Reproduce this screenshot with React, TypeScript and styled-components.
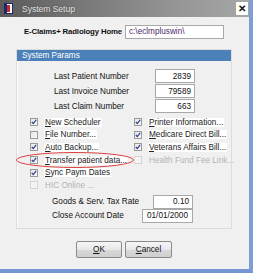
import React from "react";
import styled, { createGlobalStyle } from "styled-components";

const Global = createGlobalStyle`
  html, body { margin: 0; padding: 0; background: #f0f0f0; }
  body { font-family: "Liberation Sans", Arial, sans-serif; font-size: 8.2px; color: #111; }
`;

const Window = styled.div`
  position: relative;
  width: 253px;
  height: 273px;
  box-sizing: border-box;
  display: flex;
  flex-direction: column;
  background: #f0f0f0;
  border-right: 4px solid #7e9ed6;
  border-bottom: 4px solid #7596d2;
  overflow: hidden;
`;

const TitleBar = styled.div`
  height: 17px;
  flex: none;
  display: flex;
  align-items: center;
  padding-left: 4px;
  gap: 9px;
  background: linear-gradient(to right, #5a5a5a 0%, #767676 30%, #959595 70%, #a6a6a6 100%);
`;

const TitleText = styled.span`
  color: #e4e4e4;
  font-size: 8.5px;
  text-shadow: 0 0 2px #444;
  flex: 1;
`;

const CloseBtn = styled.div`
  width: 12px;
  height: 13px;
  margin-right: 1px;
  background: #fff;
  display: flex;
  align-items: center;
  justify-content: center;
  font-weight: bold;
  font-size: 10px;
`;

const Body = styled.div`
  flex: 1;
  display: flex;
  flex-direction: column;
  padding: 7px 17px 0 16px;
`;

const HomeRow = styled.div`
  display: flex;
  align-items: center;
  padding-left: 8px;
  gap: 7px;
  height: 15px;
  white-space: nowrap;
`;

const BoldLabel = styled.span`
  font-weight: bold;
  font-size: 7.8px;
  letter-spacing: -0.15px;
  width: 94px;
`;

const Field = styled.div<{ $w: number; $align?: string }>`
  width: ${(p) => p.$w}px;
  height: 14px;
  box-sizing: border-box;
  background: #fff;
  border: 1px solid #a8a8a8;
  display: flex;
  align-items: center;
  justify-content: ${(p) => (p.$align === "left" ? "flex-start" : p.$align === "center" ? "center" : "flex-end")};
  padding: 0 3px;
  font-size: 8.2px;
  white-space: nowrap;
`;

const Panel = styled.div`
  margin-top: 10px;
  border: 1px solid #dcdcdc;
  box-shadow: inset 1px 1px 0 #fff;
  height: 178px;
  display: flex;
  flex-direction: column;
`;

const PanelHeader = styled.div`
  height: 11px;
  background: #4b80b8;
  color: #fff;
  padding-left: 5px;
  display: flex;
  align-items: center;
  font-size: 8.2px;
`;

const NumberRows = styled.div`
  display: flex;
  flex-direction: column;
  gap: 1px;
  padding: 8px 0 0 37px;
`;

const FieldRow = styled.div<{ $labelW: number }>`
  display: grid;
  grid-template-columns: ${(p) => p.$labelW}px auto;
  align-items: center;
  height: 14px;
  white-space: nowrap;
`;

const Checks = styled.div`
  display: grid;
  grid-template-columns: 104px 1fr;
  grid-auto-rows: 12.6px;
  padding: 3px 0 0 13px;
`;

const CheckItem = styled.div<{ $disabled?: boolean }>`
  display: flex;
  align-items: center;
  gap: 6px;
  color: ${(p) => (p.$disabled ? "#b4b4b4" : "#222")};
`;

const Box = styled.div<{ $disabled?: boolean }>`
  width: 8px;
  height: 8px;
  flex: none;
  box-sizing: border-box;
  border: 1px solid ${(p) => (p.$disabled ? "#d4d4d4" : "#9a9a9a")};
  background: ${(p) => (p.$disabled ? "#f4f4f4" : "linear-gradient(135deg, #e6e6e6, #fafafa)")};
  display: flex;
  align-items: center;
  justify-content: center;
`;

const Label = styled.span<{ $bg?: boolean }>`
  background: ${(p) => (p.$bg ? "#fff" : "transparent")};
  padding: 0 1px;
  white-space: nowrap;
  font-size: 8.2px;
`;

const BottomRows = styled.div`
  display: flex;
  flex-direction: column;
  padding: 3px 0 0 35px;
`;

const ButtonRow = styled.div`
  display: flex;
  gap: 3px;
  padding: 12px 0 0 60px;
`;

const Button = styled.div<{ $w: number }>`
  width: ${(p) => p.$w}px;
  height: 17px;
  box-sizing: border-box;
  border: 1px solid #8a8a8a;
  border-radius: 2px;
  background: linear-gradient(#f6f6f6, #e8e8e8 50%, #d8d8d8 51%, #cfcfcf);
  display: flex;
  align-items: center;
  justify-content: center;
  font-size: 8.2px;
`;

const Ellipse = styled.svg`
  position: absolute;
  left: 15px;
  top: 151px;
`;

const Check = () => (
  <svg width="6" height="6" viewBox="0 0 6 6">
    <path d="M0.8 3 L2.3 4.6 L5.2 0.8" stroke="#2b3f8c" strokeWidth="1.2" fill="none" />
  </svg>
);

const AppIcon = () => (
  <svg width="9" height="11" viewBox="0 0 9 11">
    <rect x="0" y="0" width="9" height="11" fill="#1e2a6a" />
    <rect x="1" y="1" width="7" height="9" fill="#fff" />
    <rect x="3" y="2" width="3" height="7" fill="#c62a2a" />
    <rect x="1" y="1" width="2" height="9" fill="#1e2a6a" />
  </svg>
);

type CB = { label: React.ReactNode; checked: boolean; disabled?: boolean };

const items: CB[] = [
  { label: <><u>N</u>ew Scheduler</>, checked: true },
  { label: <><u>P</u>rinter Information...</>, checked: true },
  { label: <><u>F</u>ile Number...</>, checked: false },
  { label: <><u>M</u>edicare Direct Bill...</>, checked: true },
  { label: <><u>A</u>uto Backup...</>, checked: true },
  { label: <><u>V</u>eterans Affairs Bill...</>, checked: true },
  { label: <><u>T</u>ransfer patient data...</>, checked: true },
  { label: <>Health Fund Fee Link...</>, checked: false, disabled: true },
  { label: <><u>S</u>ync Paym Dates</>, checked: true },
  { label: null, checked: false },
  { label: <>HIC Online ...</>, checked: false, disabled: true },
];

export default function App() {
  return (
    <>
      <Global />
      <Window>
        <TitleBar>
          <AppIcon />
          <TitleText>System Setup</TitleText>
          <CloseBtn>✕</CloseBtn>
        </TitleBar>
        <Body>
          <HomeRow>
            <BoldLabel>E-Claims+ Radiology Home</BoldLabel>
            <Field $w={99} $align="left" style={{ color: "#4a2a6a" }}>c:\eclmpluswin\</Field>
          </HomeRow>
          <Panel>
            <PanelHeader>System Params</PanelHeader>
            <NumberRows>
              <FieldRow $labelW={101}>
                <span>Last Patient Number</span>
                <Field $w={40}>2839</Field>
              </FieldRow>
              <FieldRow $labelW={101}>
                <span>Last Invoice Number</span>
                <Field $w={40}>79589</Field>
              </FieldRow>
              <FieldRow $labelW={101}>
                <span>Last Claim Number</span>
                <Field $w={40}>663</Field>
              </FieldRow>
            </NumberRows>
            <Checks>
              {items.map((it, i) =>
                it.label === null ? (
                  <div key={i} />
                ) : (
                  <CheckItem key={i} $disabled={it.disabled}>
                    <Box $disabled={it.disabled}>{it.checked && <Check />}</Box>
                    <Label $bg={!it.disabled}>{it.label}</Label>
                  </CheckItem>
                )
              )}
            </Checks>
            <BottomRows>
              <FieldRow $labelW={101}>
                <span>Goods &amp; Serv. Tax Rate</span>
                <Field $w={40}>0.10</Field>
              </FieldRow>
              <FieldRow $labelW={90}>
                <span>Close Account Date</span>
                <Field $w={51} $align="center">01/01/2000</Field>
              </FieldRow>
            </BottomRows>
          </Panel>
          <ButtonRow>
            <Button $w={46}><u>O</u>K</Button>
            <Button $w={47}><u>C</u>ancel</Button>
          </ButtonRow>
        </Body>
        <Ellipse width="120" height="18" viewBox="0 0 120 18">
          <ellipse cx="60" cy="9" rx="58.5" ry="7.5" fill="none" stroke="#e04040" strokeWidth="1" />
        </Ellipse>
      </Window>
    </>
  );
}
